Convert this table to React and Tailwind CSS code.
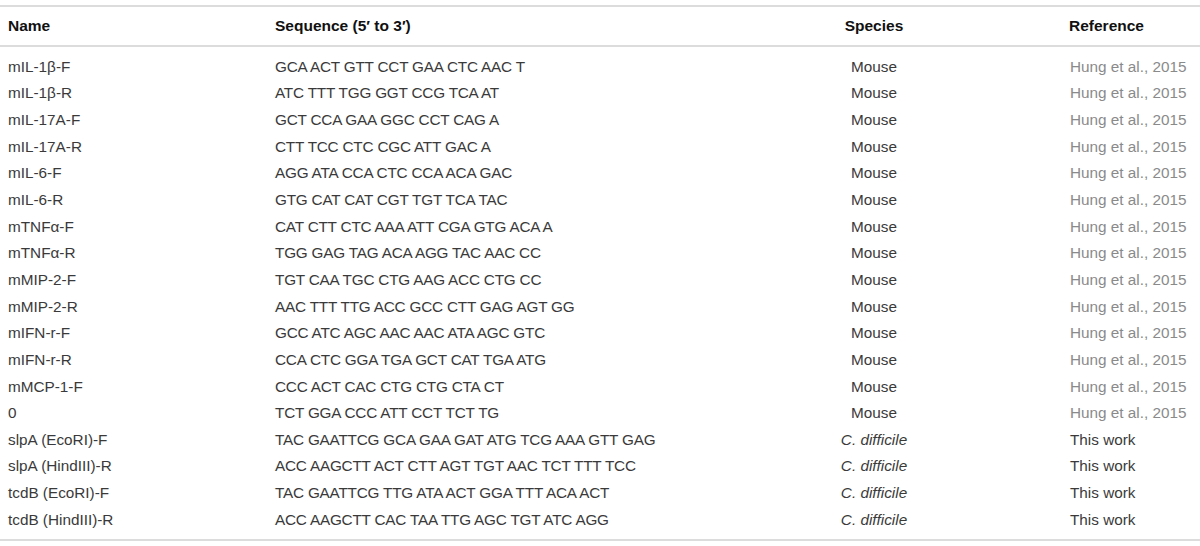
import React from "react";

const rows = [
  ["mIL-1β-F", "GCA ACT GTT CCT GAA CTC AAC T", "Mouse", "Hung et al., 2015"],
  ["mIL-1β-R", "ATC TTT TGG GGT CCG TCA AT", "Mouse", "Hung et al., 2015"],
  ["mIL-17A-F", "GCT CCA GAA GGC CCT CAG A", "Mouse", "Hung et al., 2015"],
  ["mIL-17A-R", "CTT TCC CTC CGC ATT GAC A", "Mouse", "Hung et al., 2015"],
  ["mIL-6-F", "AGG ATA CCA CTC CCA ACA GAC", "Mouse", "Hung et al., 2015"],
  ["mIL-6-R", "GTG CAT CAT CGT TGT TCA TAC", "Mouse", "Hung et al., 2015"],
  ["mTNFα-F", "CAT CTT CTC AAA ATT CGA GTG ACA A", "Mouse", "Hung et al., 2015"],
  ["mTNFα-R", "TGG GAG TAG ACA AGG TAC AAC CC", "Mouse", "Hung et al., 2015"],
  ["mMIP-2-F", "TGT CAA TGC CTG AAG ACC CTG CC", "Mouse", "Hung et al., 2015"],
  ["mMIP-2-R", "AAC TTT TTG ACC GCC CTT GAG AGT GG", "Mouse", "Hung et al., 2015"],
  ["mIFN-r-F", "GCC ATC AGC AAC AAC ATA AGC GTC", "Mouse", "Hung et al., 2015"],
  ["mIFN-r-R", "CCA CTC GGA TGA GCT CAT TGA ATG", "Mouse", "Hung et al., 2015"],
  ["mMCP-1-F", "CCC ACT CAC CTG CTG CTA CT", "Mouse", "Hung et al., 2015"],
  ["0", "TCT GGA CCC ATT CCT TCT TG", "Mouse", "Hung et al., 2015"],
  ["slpA (EcoRI)-F", "TAC GAATTCG GCA GAA GAT ATG TCG AAA GTT GAG", "C. difficile", "This work"],
  ["slpA (HindIII)-R", "ACC AAGCTT ACT CTT AGT TGT AAC TCT TTT TCC", "C. difficile", "This work"],
  ["tcdB (EcoRI)-F", "TAC GAATTCG TTG ATA ACT GGA TTT ACA ACT", "C. difficile", "This work"],
  ["tcdB (HindIII)-R", "ACC AAGCTT CAC TAA TTG AGC TGT ATC AGG", "C. difficile", "This work"],
];

export default function App() {
  return (
    <div
      className="w-[1200px] h-[546px] bg-white pt-[5px] text-[15.3px] text-[#3a3a3a]"
      style={{ fontFamily: '"Liberation Sans", Arial, sans-serif' }}
    >
      <div className="border-t-2 border-b-2 border-[#dcdcdc]">
        <div className="grid grid-cols-[267px_525px_148px_1fr] pl-[8px] h-[38px] items-center font-bold text-[#111] text-[15.5px]">
          <div>Name</div>
          <div>Sequence (5′ to 3′)</div>
          <div className="text-center">Species</div>
          <div className="pl-[121px]">Reference</div>
        </div>
      </div>
      <div className="pt-[7px] pb-[5px] border-b-2 border-[#dcdcdc]">
        {rows.map((r, i) => (
          <div
            key={i}
            className="grid grid-cols-[267px_525px_148px_1fr] pl-[8px] h-[26.65px] items-center whitespace-nowrap"
          >
            <div>{r[0]}</div>
            <div className="tracking-[-0.2px]">{r[1]}</div>
            <div className={r[2] === "Mouse" ? "text-center" : "text-center italic"}>{r[2]}</div>
            <div className={r[3] === "This work" ? "pl-[122px] text-[#3a3a3a]" : "pl-[122px] text-[#8a8a8a]"}>
              {r[3]}
            </div>
          </div>
        ))}
      </div>
    </div>
  );
}
